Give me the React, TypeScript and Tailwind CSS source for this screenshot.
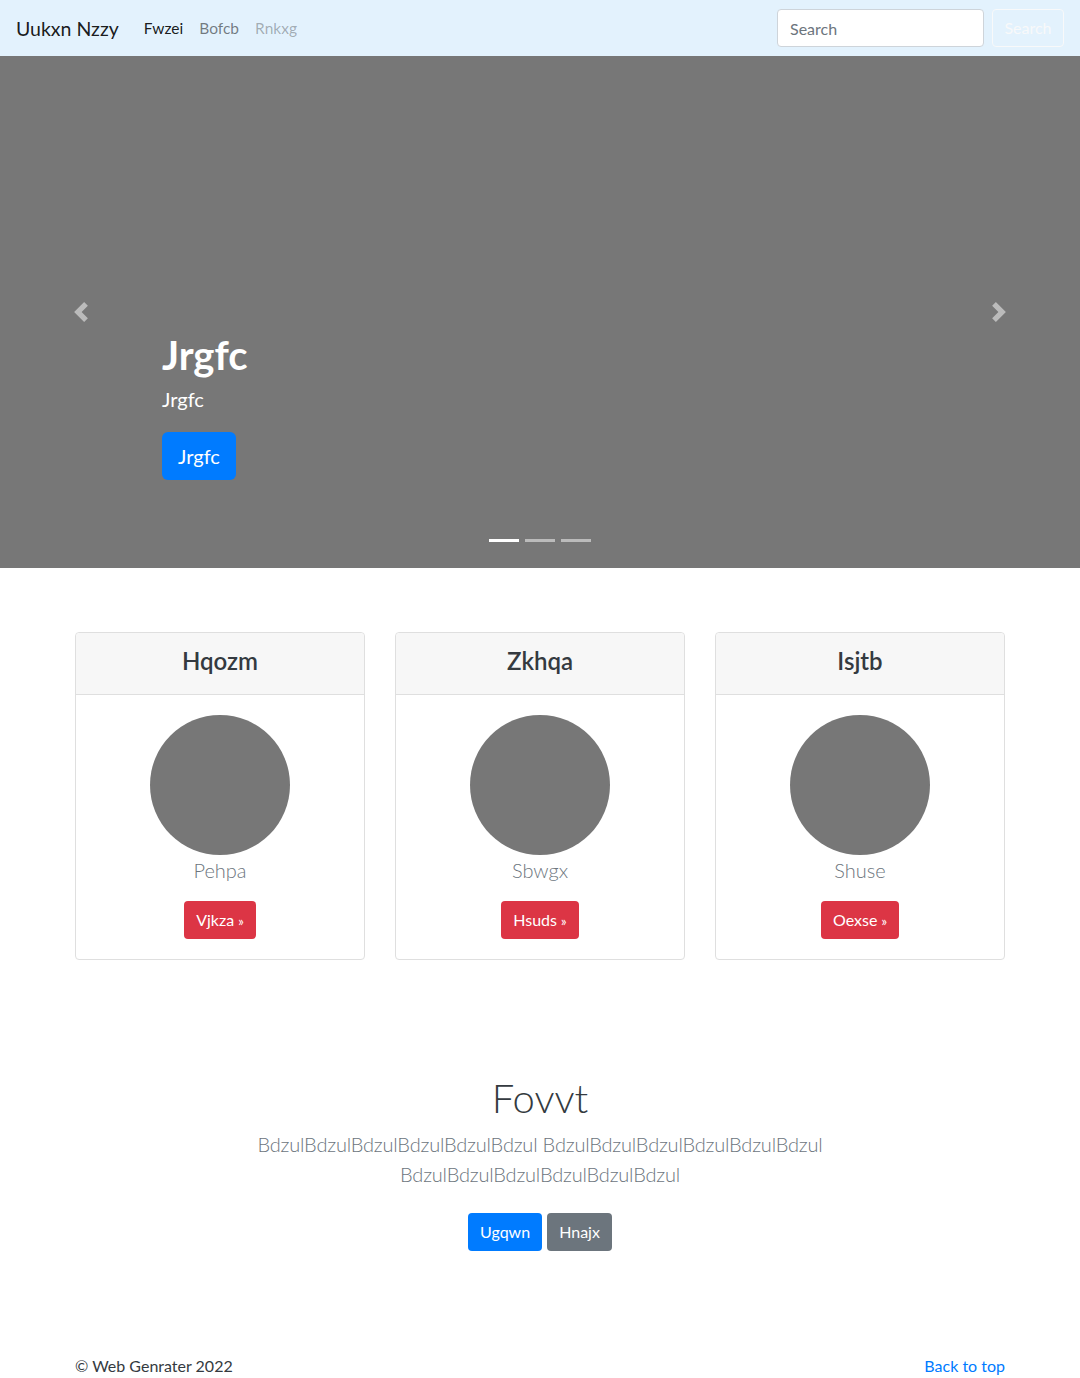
import React from 'react';

const font = { fontFamily: 'Lato, "Noto Sans", sans-serif' };

const Chevron: React.FC<{ dir: 'left' | 'right' }> = ({ dir }) => (
  <svg width="20" height="20" viewBox="0 0 8 8" className="opacity-50">
    {dir === 'left' ? (
      <path fill="#fff" d="M5.25 0l-4 4 4 4 1.5-1.5L4.25 4l2.5-2.5L5.25 0z" />
    ) : (
      <path fill="#fff" d="M2.75 0l-1.5 1.5L3.75 4l-2.5 2.5L2.75 8l4-4-4-4z" />
    )}
  </svg>
);

interface PriceCardProps {
  title: string;
  name: string;
  action: string;
}

const PriceCard: React.FC<PriceCardProps> = ({ title, name, action }) => (
  <div className="flex flex-col rounded border border-[#dfdfdf] bg-white">
    <div className="flex h-[62px] items-center justify-center rounded-t border-b border-[#dfdfdf] bg-[#f7f7f7] pb-[5px]">
      <h4 className="text-[24px] font-semibold text-[#343a40]">{title}</h4>
    </div>
    <div className="flex flex-col items-center p-5">
      <div className="h-[140px] w-[140px] rounded-full bg-[#777777]" />
      <p className="mb-[16px] text-[20px] font-light leading-[30px] text-[#6c757d]">{name}</p>
      <button className="h-[38px] rounded bg-[#dc3545] px-3 text-[16px] text-white">
        {action} <span className="text-[13px]">»</span>
      </button>
    </div>
  </div>
);

export default function App() {
  return (
    <div className="min-h-[1378px] bg-white text-[#212529]" style={font}>
      {/* navbar */}
      <nav className="flex h-14 items-center bg-[#e3f2fd] px-4">
        <div className="flex items-center pt-[2px]">
          <span className="mr-[17px] text-[19.5px] text-black/90">Uukxn Nzzy</span>
          <div className="flex text-[15.5px]">
            <span className="px-2 text-black/90">Fwzei</span>
            <span className="px-2 text-black/50">Bofcb</span>
            <span className="px-2 text-black/30">Rnkxg</span>
          </div>
        </div>
        <div className="ml-auto flex items-center gap-2">
          <div className="flex h-[38px] w-[207px] items-center rounded border border-[#ced4da] bg-white px-3 pt-[2px] text-[16px] text-[#6c757d]">
            Search
          </div>
          <button className="h-[38px] w-[72px] rounded border border-[#f8f9fa] text-[16px] text-[#f8f9fa]">
            Search
          </button>
        </div>
      </nav>

      {/* carousel */}
      <div className="relative flex h-[512px] flex-col justify-end bg-[#777777] pb-[88px] pl-[162px]">
        <h1 className="text-[40px] font-bold leading-[48px] text-white">Jrgfc</h1>
        <p className="mt-2 text-[20px] leading-6 text-white">Jrgfc</p>
        <div className="mt-[21px]">
          <button className="h-12 rounded-md bg-[#007bff] px-4 text-[20px] text-white">Jrgfc</button>
        </div>
        <div className="absolute left-0 top-0 flex h-full w-[162px] items-center justify-center">
          <Chevron dir="left" />
        </div>
        <div className="absolute right-0 top-0 flex h-full w-[162px] items-center justify-center">
          <Chevron dir="right" />
        </div>
        <div className="absolute bottom-[26px] left-0 flex w-full justify-center gap-[6px]">
          <span className="h-[3px] w-[30px] bg-white" />
          <span className="h-[3px] w-[30px] bg-white/50" />
          <span className="h-[3px] w-[30px] bg-white/50" />
        </div>
      </div>

      {/* cards */}
      <div className="mx-auto mt-16 grid w-[930px] grid-cols-3 gap-[30px]">
        <PriceCard title="Hqozm" name="Pehpa" action="Vjkza" />
        <PriceCard title="Zkhqa" name="Sbwgx" action="Hsuds" />
        <PriceCard title="Isjtb" name="Shuse" action="Oexse" />
      </div>

      {/* jumbotron */}
      <section className="mx-auto mt-[114px] flex w-[610px] flex-col items-center text-center">
        <h2 className="text-[40px] font-light leading-[48px] text-[#343a40]">Fovvt</h2>
        <p className="mt-[7px] text-[20px] font-light leading-[30px] tracking-[-0.2px] text-[#6c757d]">
          BdzulBdzulBdzulBdzulBdzulBdzul BdzulBdzulBdzulBdzulBdzulBdzul BdzulBdzulBdzulBdzulBdzulBdzul
        </p>
        <div className="mt-[24px] flex gap-[5px]">
          <button className="h-[38px] rounded bg-[#007bff] px-3 text-[16px] text-white">Ugqwn</button>
          <button className="h-[38px] rounded bg-[#6c757d] px-3 text-[16px] text-white">Hnajx</button>
        </div>
      </section>

      {/* footer */}
      <footer className="mx-auto mt-[103px] flex w-[930px] items-center justify-between text-[16px] leading-6">
        <span className="text-[#343a40]">© Web Genrater 2022</span>
        <span className="text-[#007bff]">Back to top</span>
      </footer>
    </div>
  );
}
